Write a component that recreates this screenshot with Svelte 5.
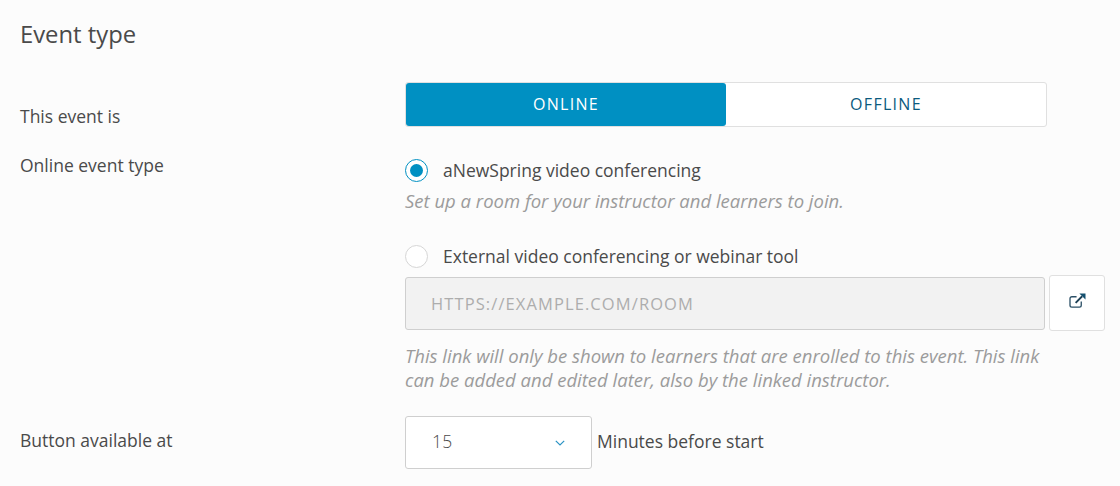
<script lang="ts">
    let mode = $state("online");
    let conferencing = $state("internal");
</script>

<main class="panel">
    <h2>Event type</h2>

    <div class="row first">
        <span class="label">This event is</span>
        <div class="toggle">
            <button class:active={mode === "online"} onclick={() => (mode = "online")}>ONLINE</button>
            <button class:active={mode === "offline"} onclick={() => (mode = "offline")}>OFFLINE</button>
        </div>
    </div>

    <div class="row second">
        <span class="label">Online event type</span>
        <div class="options">
            <label class="radio">
                <input type="radio" bind:group={conferencing} value="internal" />
                <span class="dot"></span>
                aNewSpring video conferencing
            </label>
            <p class="hint">Set up a room for your instructor and learners to join.</p>

            <label class="radio external">
                <input type="radio" bind:group={conferencing} value="external" />
                <span class="dot"></span>
                External video conferencing or webinar tool
            </label>
            <div class="url">
                <input type="text" placeholder="HTTPS://EXAMPLE.COM/ROOM" disabled />
                <button class="open" aria-label="Open link">
                    <svg width="17" height="15" viewBox="0 0 18 16" fill="none">
                        <path d="M8 4H3A2 2 0 0 0 1 6v7a2 2 0 0 0 2 2h8a2 2 0 0 0 2-2V9" stroke="#2b4f66" stroke-width="1.4" />
                        <path d="M7 10.5 14 3.5" stroke="#1d3f55" stroke-width="2" />
                        <path d="M11 .5H17.5V7Z" fill="#14506f" />
                    </svg>
                </button>
            </div>
            <p class="hint long">This link will only be shown to learners that are enrolled to this event. This link can be added and edited later, also by the linked instructor.</p>
        </div>
    </div>

    <div class="row third">
        <span class="label">Button available at</span>
        <div class="available">
            <div class="select">
                <span>15</span>
                <svg width="10" height="6" viewBox="0 0 10 6" fill="none">
                    <path d="M.8.8 5 5 9.2.8" stroke="#2a93c4" stroke-width="1.2" />
                </svg>
            </div>
            <span class="unit">Minutes before start</span>
        </div>
    </div>
</main>

<style>
    :global(body) {
        background: #fcfcfc;
    }

    .panel {
        height: 486px;
        overflow: hidden;
        box-sizing: border-box;
        padding: 18px 15px 0 20px;
        font-family: "Open Sans", sans-serif;
        font-size: 17.5px;
        line-height: 24px;
        color: #4a4a4a;
    }

    h2 {
        margin: 0 0 31px;
        font-size: 23.8px;
        line-height: 33px;
        font-weight: 400;
    }

    .row {
        display: grid;
        grid-template-columns: 385px 1fr;
    }

    .first {
        height: 45px;
        margin-bottom: 26px;
    }

    .first .label {
        padding-top: 22px;
    }

    .toggle {
        display: flex;
        width: 642px;
        height: 45px;
        box-sizing: border-box;
        background: #fff;
        border: 1px solid #e0e0e0;
        border-radius: 3px;
    }

    .toggle button {
        flex: 1;
        padding: 0 0 2px;
        background: transparent;
        border: 0;
        border-radius: 3px;
        color: #0b5a7e;
        font: inherit;
        font-size: 16px;
        letter-spacing: 1.3px;
        cursor: pointer;
    }

    .toggle button.active {
        background: #0090c2;
        color: #fff;
    }

    .options {
        margin-top: 5px;
    }

    .radio {
        display: flex;
        align-items: center;
        height: 24px;
        gap: 15px;
        cursor: pointer;
    }

    .radio input {
        display: none;
    }

    .dot {
        position: relative;
        width: 23px;
        height: 23px;
        box-sizing: border-box;
        background: #fff;
        border: 1px solid #d6d6d6;
        border-radius: 50%;
    }

    .radio input:checked + .dot {
        border-color: #0090c2;
    }

    .radio input:checked + .dot::after {
        content: "";
        position: absolute;
        inset: 4px;
        background: #0090c2;
        border-radius: 50%;
    }

    .hint {
        margin: 7px 0 0;
        width: 642px;
        color: #9b9b9b;
        font-size: 18.5px;
        font-style: italic;
    }

    .external {
        margin-top: 31px;
    }

    .url {
        display: flex;
        align-items: center;
        gap: 4px;
        margin-top: 7px;
    }

    .url input {
        width: 640px;
        height: 53px;
        box-sizing: border-box;
        padding: 0 25px;
        background: #f2f2f2;
        border: 1px solid #cfcfcf;
        border-radius: 3px;
        font: inherit;
        font-size: 16.5px;
        letter-spacing: 1.1px;
    }

    .url input::placeholder {
        color: #adadad;
        opacity: 1;
    }

    .open {
        display: flex;
        align-items: center;
        justify-content: center;
        width: 56px;
        height: 56px;
        padding: 0;
        background: #fff;
        border: 1px solid #e0e0e0;
        border-radius: 3px;
    }

    .open svg {
        margin-bottom: 5px;
    }

    .long {
        margin-top: 13px;
    }

    .third {
        margin-top: 24px;
    }

    .third .label {
        padding-top: 12px;
    }

    .available {
        display: flex;
        align-items: center;
        gap: 5px;
    }

    .select {
        display: flex;
        align-items: center;
        justify-content: space-between;
        width: 187px;
        height: 53px;
        box-sizing: border-box;
        padding: 0 26px;
        background: #fff;
        border: 1px solid #cfcfcf;
        border-radius: 3px;
    }

    .select span {
        padding-bottom: 3px;
        color: #4a4a4a;
        font-weight: 300;
        letter-spacing: 0.3px;
    }

    .unit {
        padding-bottom: 3px;
    }
</style>
